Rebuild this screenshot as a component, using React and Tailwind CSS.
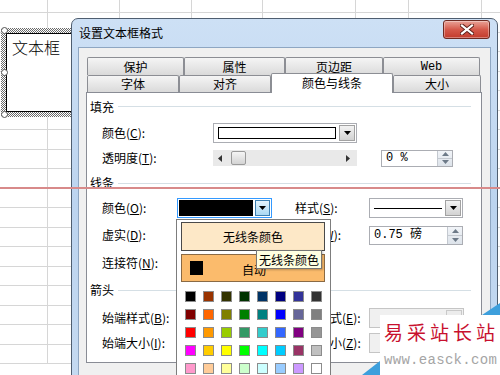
import React from "react";

const SHEET_ROWS = Array.from({ length: 19 }, (_, i) => i);

const SWATCHES = [
  "#000000", "#993300", "#333300", "#003300", "#003366", "#000080", "#333399", "#333333",
  "#800000", "#ff6600", "#808000", "#008000", "#008080", "#0000ff", "#666699", "#808080",
  "#ff0000", "#ff9900", "#99cc00", "#339966", "#33cccc", "#3366ff", "#800080", "#969696",
  "#ff00ff", "#ffcc00", "#ffff00", "#00ff00", "#00ffff", "#00ccff", "#993366", "#c0c0c0",
  "#ff99cc", "#ffcc99", "#ffff99", "#ccffcc", "#ccffff", "#99ccff", "#cc99ff", "#ffffff",
];

function SheetRow({ first, odd }) {
  const height = first ? "h-[13px]" : odd ? "h-[19px]" : "h-[20px]";
  return (
    <div className={`flex shrink-0 border-b border-[#d6d6d6] ${height}`}>
      <div className="w-[48px] shrink-0 border-r border-[#d6d6d6]" />
      <div className="w-[72px] shrink-0 border-r border-[#d6d6d6]" />
      <div className="w-[72px] shrink-0 border-r border-[#d6d6d6]" />
      <div className="w-[71px] shrink-0 border-r border-[#d6d6d6]" />
      <div className="w-[93px] shrink-0 border-r border-[#d6d6d6]" />
      <div className="w-[53px] shrink-0 border-r border-[#d6d6d6]" />
      <div className="w-[73px] shrink-0 border-r border-[#d6d6d6]" />
    </div>
  );
}

function DownArrow() {
  return (
    <svg width="7" height="4" viewBox="0 0 7 4">
      <path d="M0 0h7L3.5 4z" fill="#000" />
    </svg>
  );
}

function DropButton({ hot }) {
  if (hot) {
    return (
      <div className="flex w-[15px] shrink-0 items-center justify-center border border-[#3c7fb1] bg-gradient-to-b from-[#e5f4fc] to-[#a9d8f3]">
        <DownArrow />
      </div>
    );
  }
  return (
    <div className="flex w-[16px] shrink-0 items-center justify-center border border-[#a2a2a2] bg-gradient-to-b from-[#f3f3f3] to-[#d2d2d2]">
      <DownArrow />
    </div>
  );
}

function SpinButtons() {
  return (
    <div className="flex w-[15px] shrink-0 flex-col border-l border-[#c4c9d0] bg-gradient-to-b from-[#f1f4f8] to-[#dde3ea]">
      <div className="flex flex-1 items-center justify-center border-b border-[#c4c9d0]">
        <svg width="7" height="4" viewBox="0 0 7 4">
          <path d="M3.5 0L7 4H0z" fill="#6d7a88" />
        </svg>
      </div>
      <div className="flex flex-1 items-center justify-center">
        <svg width="7" height="4" viewBox="0 0 7 4">
          <path d="M0 0h7L3.5 4z" fill="#6d7a88" />
        </svg>
      </div>
    </div>
  );
}

function Label({ text, k, tail = "):", className }) {
  return (
    <span className={`shrink-0 whitespace-nowrap ${className}`}>
      {text}(<span className="underline">{k}</span>{tail}
    </span>
  );
}

function SectionHeader({ text, height }) {
  return (
    <div className={`flex items-center pl-[3px] ${height}`}>
      <span>{text}</span>
      <div className="ml-[4px] mr-[10px] h-px flex-1 bg-[#d5dfe5]" />
    </div>
  );
}

function TitleBar() {
  return (
    <div className="flex h-[28px] items-start justify-between pl-[7px] pr-[7px]">
      <span className="self-center text-[12px] text-black">设置文本框格式</span>
      <div className="mt-px flex h-[19px] w-[47px] items-center justify-center rounded-[3px] border border-[#6e2a22] bg-gradient-to-b from-[#e8a298] via-[#d5594b] to-[#c23b2c] shadow-[inset_0_0_0_1px_rgba(255,255,255,0.35)]">
        <svg width="14" height="11" viewBox="0 0 14 11">
          <path d="M2 1.5l10 8M12 1.5l-10 8" stroke="#5a1d17" strokeWidth="4" strokeLinecap="square" />
          <path d="M2 1.5l10 8M12 1.5l-10 8" stroke="#ffffff" strokeWidth="2.2" strokeLinecap="square" />
        </svg>
      </div>
    </div>
  );
}

function Tab({ label, className }) {
  return (
    <div
      className={`flex shrink-0 items-center justify-center rounded-t-[2px] border border-b-0 border-[#8c8e94] bg-gradient-to-b from-[#f5f5f5] to-[#dadada] text-[12px] ${className}`}
    >
      {label}
    </div>
  );
}

function Tabs() {
  return (
    <div className="flex flex-col">
      <div className="ml-px flex h-[18px]">
        <Tab label="保护" className="w-[97px]" />
        <Tab label="属性" className="w-[101px]" />
        <Tab label="页边距" className="w-[98px]" />
        <Tab label="Web" className="w-[97px] font-['Liberation_Mono',monospace] text-[11px]" />
      </div>
      <div className="ml-px flex h-[17px] items-end">
        <Tab label="字体" className="h-[17px] w-[92px]" />
        <Tab label="对齐" className="h-[17px] w-[92px]" />
        <div className="relative z-10 -mb-px flex h-[20px] w-[122px] shrink-0 items-center justify-center rounded-t-[2px] border border-b-0 border-[#8c8e94] bg-white pb-[2px] text-[12px]">
          颜色与线条
        </div>
        <Tab label="大小" className="h-[17px] w-[88px]" />
      </div>
    </div>
  );
}

function FillCombo() {
  return (
    <div className="flex h-[20px] w-[144px] shrink-0 border border-[#abadb3] bg-white p-px">
      <div className="flex flex-1 items-center px-[3px]">
        <div className="h-[12px] w-full border border-black bg-white" />
      </div>
      <DropButton />
    </div>
  );
}

function Slider() {
  return (
    <div className="flex h-[16px] w-[144px] shrink-0 items-center bg-[#e9e9e9]">
      <svg className="ml-[5px]" width="4" height="7" viewBox="0 0 4 7">
        <path d="M4 0v7L0 3.5z" fill="#333" />
      </svg>
      <div className="ml-[9px] h-[14px] w-[15px] rounded-[2px] border border-[#9a9a9a] bg-gradient-to-b from-[#f5f5f5] to-[#d3d3d3]" />
      <div className="flex-1" />
      <svg className="mr-[7px]" width="4" height="7" viewBox="0 0 4 7">
        <path d="M0 0v7L4 3.5z" fill="#333" />
      </svg>
    </div>
  );
}

function Spin({ value, className }) {
  return (
    <div className={`flex shrink-0 border border-[#abadb3] bg-white ${className}`}>
      <span className="flex flex-1 items-center pl-[4px] font-['Liberation_Mono','Noto_Sans_CJK_SC',monospace] text-[12px]">
        {value}
      </span>
      <SpinButtons />
    </div>
  );
}

function LineColorCombo() {
  return (
    <div className="flex h-[20px] w-[95px] shrink-0 border border-[#3399ff] bg-white p-px">
      <div className="mr-[2px] flex-1 bg-black" />
      <DropButton hot />
    </div>
  );
}

function StyleCombo() {
  return (
    <div className="flex h-[20px] w-[94px] shrink-0 border border-[#abadb3] bg-white p-px">
      <div className="flex flex-1 items-center px-[3px]">
        <div className="h-px w-full bg-black" />
      </div>
      <DropButton />
    </div>
  );
}

function PlainCombo({ disabled }) {
  return (
    <div
      className={`flex h-[20px] w-[95px] shrink-0 border p-px ${
        disabled ? "border-[#c5c5c5] bg-[#f0f0f0]" : "border-[#abadb3] bg-white"
      }`}
    >
      <div className="flex-1" />
      <div className="flex w-[16px] shrink-0 items-center justify-center border border-[#c9c9c9] bg-[#ececec]" />
    </div>
  );
}

function Panel() {
  return (
    <div className="h-[271px] w-[396px] border border-[#898c95] bg-white text-[12px]">
      <SectionHeader text="填充" height="h-[27px]" />
      <div className="flex h-[26px] items-center pl-[15px]">
        <Label text="颜色" k="C" className="w-[111px]" />
        <FillCombo />
      </div>
      <div className="flex h-[24px] items-center pl-[15px]">
        <Label text="透明度" k="T" className="w-[111px]" />
        <Slider />
        <Spin value="0 %" className="ml-[24px] h-[17px] w-[72px]" />
      </div>
      <SectionHeader text="线条" height="h-[26px]" />
      <div className="flex h-[24px] items-center pl-[15px]">
        <Label text="颜色" k="O" className="w-[75px]" />
        <LineColorCombo />
        <Label text="样式" k="S" className="ml-[23px] w-[74px]" />
        <StyleCombo />
      </div>
      <div className="flex h-[30px] items-center pl-[15px]">
        <Label text="虚实" k="D" className="w-[75px]" />
        <PlainCombo />
        <Label text="粗细" k="W" className="ml-[23px] w-[74px]" />
        <Spin value="0.75 磅" className="h-[19px] w-[94px]" />
      </div>
      <div className="flex h-[26px] items-center pl-[15px]">
        <Label text="连接符" k="N" className="w-[75px]" />
        <PlainCombo />
      </div>
      <SectionHeader text="箭头" height="h-[28px]" />
      <div className="flex h-[28px] items-center pl-[15px]">
        <Label text="始端样式" k="B" className="w-[75px]" />
        <PlainCombo disabled />
        <Label text="末端样式" k="E" className="ml-[22px] w-[75px]" />
        <PlainCombo disabled />
      </div>
      <div className="flex h-[22px] items-center pl-[15px]">
        <Label text="始端大小" k="I" className="w-[75px]" />
        <PlainCombo disabled />
        <Label text="末端大小" k="Z" className="ml-[22px] w-[75px]" />
        <PlainCombo disabled />
      </div>
    </div>
  );
}

function Dialog() {
  return (
    <div className="absolute left-[71px] top-[18px] z-10 h-[370px] w-[427px] rounded-t-[7px] border border-[#4f5e70] bg-gradient-to-b from-[#cde0f5] via-[#bcd4ef] to-[#c5daf1]">
      <TitleBar />
      <div className="mx-[6px] h-[340px] border border-[#8ea6c2] bg-[#f0f0f0] pl-[7px] pt-[9px]">
        <Tabs />
        <Panel />
      </div>
    </div>
  );
}

function ColorPopup() {
  return (
    <div className="absolute left-[176px] top-[219px] z-20 h-[160px] w-[155px] border border-[#7d7d7d] bg-white px-[4px] pt-[2px] text-[12px]">
      <div className="flex h-[29px] w-[144px] items-center justify-center border border-[#4a4a4a] bg-[#fde8c7]">
        无线条颜色
      </div>
      <div className="mt-[3px] flex h-[28px] w-[144px] items-center border border-[#8a6a44] bg-[#fbbb6c]">
        <div className="ml-[8px] h-[14px] w-[13px] bg-black" />
        <span className="ml-[39px] mt-[4px]">自动</span>
      </div>
      <div className="ml-[4px] mt-[9px] grid w-[137px] grid-cols-8 gap-[7px]">
        {SWATCHES.map((color) => (
          <div key={color} className="h-[11px] w-[11px] border border-[#8c8c8c]" style={{ backgroundColor: color }} />
        ))}
      </div>
    </div>
  );
}

function TextBox() {
  return (
    <div className="absolute left-[1px] top-[28px] h-[89px] w-[95px]">
      <div className="absolute inset-0 bg-[repeating-conic-gradient(#6a6a6a_0%_25%,#ffffff_0%_50%)] bg-[length:2px_2px]" />
      <div className="absolute inset-[5px] border border-black bg-white pl-[5px] pt-[3px] text-[16px] leading-[20px] font-light">
        文本框
      </div>
      <div className="absolute left-0 top-[-1px] h-[7px] w-[7px] rounded-full border border-[#555] bg-white" />
      <div className="absolute left-0 top-[41px] h-[7px] w-[7px] rounded-full border border-[#555] bg-white" />
      <div className="absolute left-0 top-[83px] h-[7px] w-[7px] rounded-full border border-[#555] bg-white" />
    </div>
  );
}

function Watermark() {
  return (
    <>
      <div className="absolute left-[482px] top-[303px] z-40 h-[12px] w-[18px] bg-[#3d9fdc] [clip-path:polygon(100%_0,100%_100%,0_100%)]" />
      <div className="absolute left-[362px] top-[361px] z-40 h-[14px] w-[18px] bg-[#3d9fdc] [clip-path:polygon(100%_0,100%_100%,0_100%)]" />
      <div className="absolute left-[380px] top-[315px] z-40 h-[60px] w-[120px] bg-white pl-[4px] pt-[7px]">
        <div className="whitespace-nowrap text-[19px] leading-[20px] tracking-[4px] text-[#c8102e]">易采站长站</div>
        <div className="mt-[11px] whitespace-nowrap font-['Liberation_Mono',monospace] text-[14px] leading-[14px] tracking-[0.3px] text-[#a5a5a5]">
          www.easck.com
        </div>
      </div>
    </>
  );
}

export default function App() {
  return (
    <div className="relative h-[375px] w-[500px] overflow-hidden bg-white font-['Noto_Sans_CJK_SC','Noto_Sans',sans-serif] text-[12px] text-black">
      <div className="flex flex-col">
        {SHEET_ROWS.map((i) => (
          <SheetRow key={i} first={i === 0} odd={i % 2 === 0} />
        ))}
      </div>
      <TextBox />
      <Dialog />
      <div className="absolute left-0 top-[187px] z-30 h-[2px] w-full bg-[#d88a8a]" />
      <ColorPopup />
      <div className="absolute left-[256px] top-[250px] z-30 flex h-[19px] w-[66px] items-center justify-center border border-[#767676] bg-[#ffffe1] text-[12px] shadow-[1px_1px_2px_rgba(0,0,0,0.25)]">
        无线条颜色
      </div>
      <Watermark />
    </div>
  );
}
